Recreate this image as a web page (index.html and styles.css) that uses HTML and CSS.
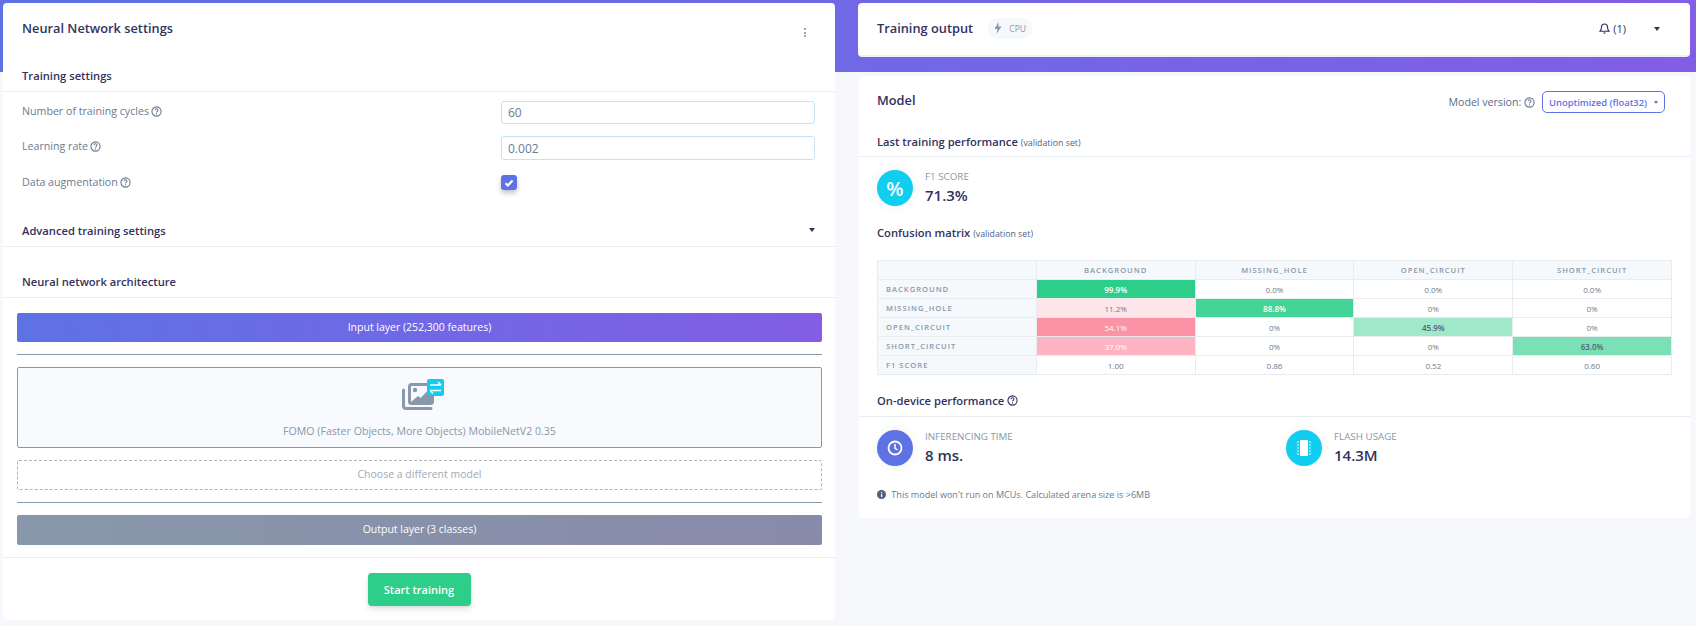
FILE: index.html
```html
<!DOCTYPE html>
<html lang="en">
<head>
    <meta charset="UTF-8">
    <title>Neural Network settings</title>
    <link rel="stylesheet" href="styles.css">
</head>
<body>
    <svg class="defs" width="0" height="0">
        <symbol id="help" viewBox="0 0 12 12">
            <circle cx="6" cy="6" r="5" fill="none" stroke="currentColor" stroke-width="1.200"/>
            <path d="M4.4 4.7c0-2.100 3.200-2.100 3.200-.1 0 1.300-1.600 1.200-1.600 2.500" fill="none" stroke="currentColor" stroke-width="1.100"/>
            <circle cx="6" cy="8.700" r=".7" fill="currentColor"/>
        </symbol>
    </svg>
    <div class="page">
        <!-- left column -->
        <div class="card left">
            <div class="card-head">
                <h2>Neural Network settings</h2>
                <span class="kebab"><i></i><i></i><i></i></span>
            </div>

            <div class="section-head"><h3>Training settings</h3></div>
            <div class="form">
                <div class="form-row">
                    <label>Number of training cycles <svg class="help"><use href="#help"/></svg></label>
                    <input class="field" type="text" value="60">
                </div>
                <div class="form-row">
                    <label>Learning rate <svg class="help"><use href="#help"/></svg></label>
                    <input class="field tall" type="text" value="0.002">
                </div>
                <div class="form-row">
                    <label>Data augmentation <svg class="help"><use href="#help"/></svg></label>
                    <div class="check-col">
                        <span class="checkbox">
                            <svg viewBox="0 0 10 10" width="10" height="10"><path d="M1.500 5.300l2.300 2.200 4.700-5" fill="none" stroke="#fff" stroke-width="2.200"/></svg>
                        </span>
                    </div>
                </div>
            </div>

            <div class="section-head advanced">
                <h3>Advanced training settings</h3>
                <span class="caret"></span>
            </div>
            <div class="section-head arch"><h3>Neural network architecture</h3></div>

            <div class="layers">
                <div class="layer input-layer">Input layer (252,300 features)</div>
                <div class="rule"></div>
                <div class="model-box">
                    <svg class="model-icon" width="42" height="31" viewBox="0 0 42 31">
                        <path d="M1.500 11v16a2.500 2.500 0 0 0 2.500 2.500h25" fill="none" stroke="#8a98ab" stroke-width="3" stroke-linecap="round"/>
                        <rect x="7.500" y="5.500" width="23" height="19" rx="2" fill="none" stroke="#8a98ab" stroke-width="3"/>
                        <circle cx="13" cy="11" r="2.200" fill="#8a98ab"/>
                        <path d="M9 23l7-6 2.500 2 7-7 5 4v7z" fill="#8a98ab"/>
                        <rect x="25" y="0" width="17" height="17" rx="2" fill="#11cdef"/>
                        <path d="M28 6h11m-3-3l3 3M39 11.500H28m3 3l-3-3" fill="none" stroke="#fff" stroke-width="1.500"/>
                    </svg>
                    <span>FOMO (Faster Objects, More Objects) MobileNetV2 0.35</span>
                </div>
                <div class="choose">Choose a different model</div>
                <div class="rule"></div>
                <div class="layer output-layer">Output layer (3 classes)</div>
            </div>
            <div class="card-foot">
                <button class="start-btn">Start training</button>
            </div>
        </div>

        <!-- right column -->
        <div class="right">
            <div class="card output-head">
                <h2>Training output</h2>
                <span class="pill">
                    <svg width="8" height="12" viewBox="0 0 8 12"><path d="M4.500 0L.5 7h3L2.500 12 7.500 4.500h-3z" fill="#8a98ab"/></svg>
                    CPU
                </span>
                <span class="bell">
                    <svg width="11" height="12" viewBox="0 0 11 12"><path d="M1 9.200c1-1 1.500-2 1.500-4.200a3 3 0 0 1 6 0c0 2.200.5 3.200 1.500 4.200z" fill="none" stroke="#32325d" stroke-width="1.100"/><path d="M4.300 10.500a1.200 1.200 0 0 0 2.400 0z" fill="#32325d"/></svg>
                    (1)
                </span>
                <span class="caret"></span>
            </div>

            <div class="card model">
                <div class="model-head">
                    <h2>Model</h2>
                    <div class="version">
                        <span>Model version: <svg class="help"><use href="#help"/></svg></span>
                        <span class="select">Unoptimized (float32) <i></i></span>
                    </div>
                </div>

                <div class="section-head last"><h3>Last training performance <small>(validation set)</small></h3></div>
                <div class="metrics first">
                    <div class="metric">
                        <span class="circle cyan percent">%</span>
                        <div class="metric-text">
                            <div class="metric-label">F1 score</div>
                            <div class="metric-value">71.3%</div>
                        </div>
                    </div>
                </div>

                <h3 class="matrix-title">Confusion matrix <small>(validation set)</small></h3>
                <table class="matrix">
                    <tr>
                        <th></th>
                        <th>BACKGROUND</th>
                        <th>MISSING_HOLE</th>
                        <th>OPEN_CIRCUIT</th>
                        <th>SHORT_CIRCUIT</th>
                    </tr>
                    <tr>
                        <th>BACKGROUND</th>
                        <td class="g100">99.9%</td>
                        <td>0.0%</td>
                        <td>0.0%</td>
                        <td>0.0%</td>
                    </tr>
                    <tr>
                        <th>MISSING_HOLE</th>
                        <td class="r11">11.2%</td>
                        <td class="g89">88.8%</td>
                        <td>0%</td>
                        <td>0%</td>
                    </tr>
                    <tr>
                        <th>OPEN_CIRCUIT</th>
                        <td class="r54">54.1%</td>
                        <td>0%</td>
                        <td class="g46">45.9%</td>
                        <td>0%</td>
                    </tr>
                    <tr>
                        <th>SHORT_CIRCUIT</th>
                        <td class="r37">37.0%</td>
                        <td>0%</td>
                        <td>0%</td>
                        <td class="g63">63.0%</td>
                    </tr>
                    <tr>
                        <th>F1 SCORE</th>
                        <td>1.00</td>
                        <td>0.86</td>
                        <td>0.52</td>
                        <td>0.60</td>
                    </tr>
                </table>

                <div class="section-head device"><h3>On-device performance <svg class="help dark"><use href="#help"/></svg></h3></div>
                <div class="metrics">
                    <div class="metric wide">
                        <span class="circle indigo">
                            <svg width="16" height="16" viewBox="0 0 16 16"><circle cx="8" cy="8" r="6.500" fill="none" stroke="#fff" stroke-width="1.800"/><path d="M8 4v4.300l2.500 1.500" fill="none" stroke="#fff" stroke-width="1.500"/></svg>
                        </span>
                        <div class="metric-text">
                            <div class="metric-label">Inferencing time</div>
                            <div class="metric-value">8 ms.</div>
                        </div>
                    </div>
                    <div class="metric">
                        <span class="circle cyan">
                            <svg width="16" height="18" viewBox="0 0 16 18"><rect x="4" y="1" width="8" height="16" rx="1" fill="#fff"/><path d="M1 3h2M1 6h2M1 9h2M1 12h2M1 15h2M13 3h2M13 6h2M13 9h2M13 12h2M13 15h2" stroke="#fff" stroke-width="1"/></svg>
                        </span>
                        <div class="metric-text">
                            <div class="metric-label">Flash usage</div>
                            <div class="metric-value">14.3M</div>
                        </div>
                    </div>
                </div>
                <p class="note">
                    <svg width="9" height="9" viewBox="0 0 9 9"><circle cx="4.500" cy="4.500" r="4.500" fill="#525f7f"/><rect x="4" y="4" width="1.200" height="3" fill="#fff"/><rect x="4" y="2" width="1.200" height="1.200" fill="#fff"/></svg>
                    This model won't run on MCUs. Calculated arena size is &gt;6MB
                </p>
            </div>
        </div>
    </div>
</body>
</html>
```

FILE: styles.css
```css
* {
    box-sizing: border-box;
}

body {
    margin: 0;
    height: 626px;
    overflow: hidden;
    font-family: "Open Sans", sans-serif;
    color: #32325d;
    background-color: #f6f8fc;
    background-image: linear-gradient(87deg, #5e72e4, #825ee4);
    background-size: 100% 72px;
    background-repeat: no-repeat;
}

.defs {
    position: absolute;
}

.page {
    display: grid;
    grid-template-columns: 832px 832px;
    column-gap: 23px;
    padding: 3px 6px 0 3px;
    align-items: start;
}

.card {
    background: #fff;
    border-radius: 4px;
}

h2 {
    margin: 0;
    font-size: 12.800px;
    font-weight: 600;
}

h3 {
    margin: 0;
    font-size: 11.200px;
    font-weight: 600;
}

small {
    font-size: 8.800px;
    font-weight: 400;
    color: #525f7f;
}

.card-head {
    height: 58px;
    padding: 16px 29px 0 19px;
    display: flex;
    justify-content: space-between;
}

.kebab {
    display: flex;
    flex-direction: column;
    gap: 1.500px;
    padding-top: 9px;
}

.kebab i {
    width: 2px;
    height: 2px;
    border-radius: 50%;
    background: #7a879c;
}

.section-head {
    height: 31px;
    padding: 0 20px 2px 19px;
    display: flex;
    align-items: center;
    justify-content: space-between;
    border-bottom: 1px solid #e9ecef;
}

.caret {
    width: 0;
    height: 0;
    border-left: 3.500px solid transparent;
    border-right: 3.500px solid transparent;
    border-top: 4px solid #32325d;
}

/* form */
.form {
    padding: 9px 20px 0 19px;
    display: flex;
    flex-direction: column;
    gap: 12px;
}

.form-row {
    display: flex;
    justify-content: space-between;
    align-items: flex-start;
}

.form-row label {
    font-size: 10.650px;
    line-height: 20px;
    color: #6b7a90;
    display: flex;
    align-items: center;
    gap: 2px;
}

.help {
    width: 11px;
    height: 11px;
    color: #6b7a90;
    vertical-align: -1.500px;
}

.help.dark {
    color: #32325d;
}

.field {
    width: 314px;
    height: 23px;
    padding: 0 6px;
    border: 1px solid #c9e2f3;
    border-radius: 3px;
    background: #fff;
    font-family: "Open Sans", sans-serif;
    font-size: 12px;
    color: #6b7a90;
}

.field.tall {
    height: 24px;
}

.check-col {
    width: 314px;
    padding-top: 3px;
}

.checkbox {
    width: 16px;
    height: 15px;
    border-radius: 3px;
    background: #5e72e4;
    box-shadow: 0 3px 5px rgba(50, 50, 93, .3);
    display: flex;
    align-items: center;
    justify-content: center;
}

.advanced {
    margin-top: 24px;
}

.arch {
    margin-top: 20px;
}

/* layers */
.layers {
    padding: 15px 13px 12px 14px;
    display: flex;
    flex-direction: column;
    gap: 12px;
    border-bottom: 1px solid #e9ecef;
}

.layer {
    height: 30px;
    border-radius: 2px;
    display: flex;
    align-items: center;
    justify-content: center;
    padding-bottom: 2px;
    font-size: 10.500px;
    color: #fff;
}

.input-layer {
    height: 29px;
    background: linear-gradient(87deg, #5e72e4, #825ee4);
}

.output-layer {
    background: linear-gradient(87deg, #8898aa, #888aaa);
}

.rule {
    height: 1px;
    background: #8898aa;
}

.model-box {
    height: 81px;
    border: 1px solid #8898aa;
    border-radius: 2px;
    background: #f8fafe;
    display: flex;
    flex-direction: column;
    align-items: center;
    padding-top: 11px;
    font-size: 10.600px;
    color: #8898aa;
}

.model-icon {
    margin: 0 0 14px 6px;
}

.choose {
    height: 30px;
    border: 1px dashed #adb5bd;
    border-radius: 2px;
    display: flex;
    align-items: center;
    justify-content: center;
    padding-bottom: 2px;
    font-size: 10.500px;
    color: #a0aaba;
}

.card-foot {
    padding: 15px 0 14px;
    display: flex;
    justify-content: center;
}

.start-btn {
    width: 103px;
    height: 33px;
    border: 0;
    border-radius: 4px;
    background: #2dce89;
    box-shadow: 0 4px 6px rgba(50, 50, 93, .11), 0 1px 3px rgba(0, 0, 0, .08);
    font-family: "Open Sans", sans-serif;
    font-size: 11px;
    font-weight: 600;
    color: #fff;
}

/* right column */
.right {
    display: flex;
    flex-direction: column;
    gap: 19px;
}

.output-head {
    height: 54px;
    padding: 0 30px 2px 19px;
    display: flex;
    align-items: center;
    border-bottom: 2px solid #f0f1f4;
}

.output-head .caret {
    margin-top: 2px;
}

.pill {
    width: 44px;
    height: 21px;
    margin-left: 15px;
    border-radius: 10px;
    background: #f6f9fc;
    display: flex;
    align-items: center;
    justify-content: center;
    gap: 7px;
    font-size: 8.500px;
    color: #8898aa;
}

.bell {
    margin-left: auto;
    margin-right: 28px;
    display: flex;
    align-items: center;
    gap: 3px;
    font-size: 11px;
    font-weight: 500;
}

.model {
    height: 442px;
    margin-left: 1px;
}

.model .section-head {
    padding-left: 18px;
}

.model-head {
    height: 51px;
    padding: 15px 25px 0 18px;
    display: flex;
    justify-content: space-between;
    align-items: flex-start;
}

.model-head h2 {
    line-height: 19px;
}

.version {
    display: flex;
    align-items: center;
    gap: 7px;
    font-size: 10.600px;
    color: #5a6b8c;
}

.select {
    width: 123px;
    height: 22px;
    border: 1px solid #5e72e4;
    border-radius: 5px;
    display: flex;
    align-items: center;
    justify-content: space-between;
    padding: 0 6px;
    font-size: 9.400px;
    font-weight: 600;
    color: #5e72e4;
}

.select i {
    border-left: 2.500px solid transparent;
    border-right: 2.500px solid transparent;
    border-top: 3px solid #5e72e4;
}

.model .last {
    height: 30px;
    padding-bottom: 0;
}

.metrics {
    display: flex;
    padding: 13px 18px 0;
}

.metric {
    display: flex;
    align-items: center;
    gap: 12px;
    height: 36px;
}

.metric.wide {
    width: 409px;
}

.metric-text {
    padding-bottom: 1px;
}

.circle {
    width: 36px;
    height: 36px;
    border-radius: 50%;
    display: flex;
    align-items: center;
    justify-content: center;
    color: #fff;
    box-shadow: 0 0 12px rgba(50, 50, 93, .07);
}

.cyan {
    background: #11cdef;
}

.indigo {
    background: #5e72e4;
}

.percent {
    font-size: 20px;
    font-weight: 600;
}

.metric-label {
    font-size: 9.800px;
    line-height: 13px;
    text-transform: uppercase;
    color: #8898aa;
}

.metric-value {
    font-size: 15px;
    font-weight: 600;
    line-height: 20px;
    margin-top: 2px;
}

.matrix-title {
    margin: 19px 0 0;
    padding-left: 18px;
    line-height: 16px;
}

.matrix {
    width: 795px;
    margin: 18px 0 0 18px;
    border-collapse: collapse;
    table-layout: fixed;
}

.matrix th,
.matrix td {
    height: 19px;
    padding: 0;
    border: 1px solid #e9ecef;
    text-align: center;
    color: #6b7a90;
}

.matrix th {
    font-size: 7.600px;
    font-weight: 600;
    letter-spacing: 1px;
    color: #8898aa;
    background: #f6f9fc;
}

.matrix tr > th:first-child {
    text-align: left;
    padding-left: 8px;
}

.matrix td {
    font-size: 8px;
}

.matrix td.g100,
.matrix td.g89 {
    color: #fff;
    font-weight: 600;
}

.matrix td.r54,
.matrix td.r37 {
    color: #fff;
}

.matrix td.g46,
.matrix td.g63 {
    color: #525f7f;
    font-weight: 600;
}

.g100 { background: #2dce89; }
.g89 { background: #43d497; }
.g63 { background: #7be0b5; }
.g46 { background: #9fe8c9; }
.r11 { background: #fee5e9; }
.r54 { background: #fb92a6; }
.r37 { background: #fdb3c2; }

.device {
    margin-top: 11px;
}

.note {
    margin: 22px 0 0;
    padding-left: 18px;
    font-size: 9.050px;
    line-height: 14px;
    color: #6b7a90;
}

.note svg {
    margin-right: 3px;
    vertical-align: -1px;
}
```
